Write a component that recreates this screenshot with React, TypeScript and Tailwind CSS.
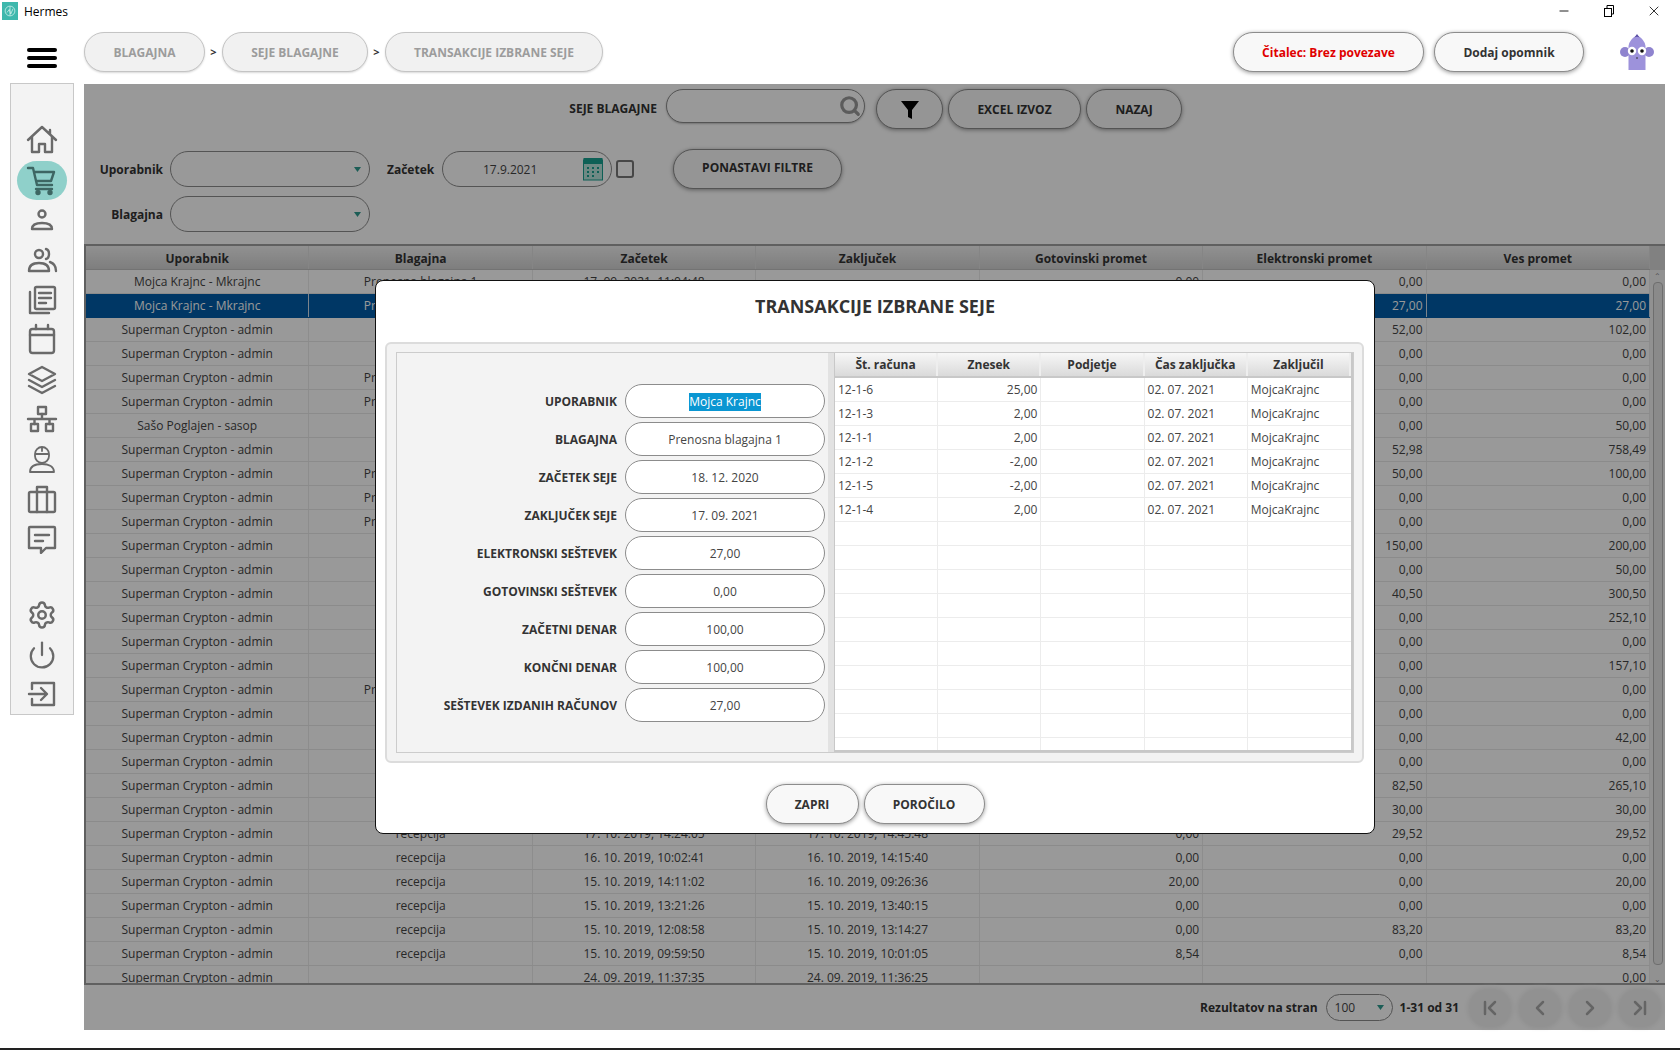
import { ChevronFirst, ChevronLast, ChevronLeft, ChevronRight, Minus, Power, Search, Settings, X } from 'lucide-react'
import type { ReactNode } from 'react'

const U = 'Superman Crypton - admin'
const P = 'Prenosna blagajna 1'
const R = 'recepcija'

// user, blagajna, zacetek, zakljucek, gotovinski, elektronski, ves
const rows: string[][] = [
  ['Mojca Krajnc - Mkrajnc', P, '17. 09. 2021, 11:04:48', '', '0,00', '0,00', '0,00'],
  ['Mojca Krajnc - Mkrajnc', P, '', '', '', '27,00', '27,00'],
  [U, '', '', '', '', '52,00', '102,00'],
  [U, '', '', '', '', '0,00', '0,00'],
  [U, P, '', '', '', '0,00', '0,00'],
  [U, P, '', '', '', '0,00', '0,00'],
  ['Sašo Poglajen - sasop', '', '', '', '', '0,00', '50,00'],
  [U, '', '', '', '', '52,98', '758,49'],
  [U, P, '', '', '', '50,00', '100,00'],
  [U, P, '', '', '', '0,00', '0,00'],
  [U, P, '', '', '', '0,00', '0,00'],
  [U, '', '', '', '', '150,00', '200,00'],
  [U, '', '', '', '', '0,00', '50,00'],
  [U, '', '', '', '', '40,50', '300,50'],
  [U, '', '', '', '', '0,00', '252,10'],
  [U, '', '', '', '', '0,00', '0,00'],
  [U, '', '', '', '', '0,00', '157,10'],
  [U, P, '', '', '', '0,00', '0,00'],
  [U, '', '', '', '', '0,00', '0,00'],
  [U, '', '', '', '', '0,00', '42,00'],
  [U, '', '', '', '', '0,00', '0,00'],
  [U, '', '', '', '', '82,50', '265,10'],
  [U, '', '', '', '', '30,00', '30,00'],
  [U, R, '17. 10. 2019, 14:24:05', '17. 10. 2019, 14:45:48', '0,00', '29,52', '29,52'],
  [U, R, '16. 10. 2019, 10:02:41', '16. 10. 2019, 14:15:40', '0,00', '0,00', '0,00'],
  [U, R, '15. 10. 2019, 14:11:02', '16. 10. 2019, 09:26:36', '20,00', '0,00', '20,00'],
  [U, R, '15. 10. 2019, 13:21:26', '15. 10. 2019, 13:40:15', '0,00', '0,00', '0,00'],
  [U, R, '15. 10. 2019, 12:08:58', '15. 10. 2019, 13:14:27', '0,00', '83,20', '83,20'],
  [U, R, '15. 10. 2019, 09:59:50', '15. 10. 2019, 10:01:05', '8,54', '0,00', '8,54'],
  [U, '', '24. 09. 2019, 11:37:35', '24. 09. 2019, 11:36:25', '', '', '0,00'],
]

const invoices = [
  ['12-1-6', '25,00'],
  ['12-1-3', '2,00'],
  ['12-1-1', '2,00'],
  ['12-1-2', '-2,00'],
  ['12-1-5', '-2,00'],
  ['12-1-4', '2,00'],
]

const fields = [
  ['BLAGAJNA', 'Prenosna blagajna 1'],
  ['ZAČETEK SEJE', '18. 12. 2020'],
  ['ZAKLJUČEK SEJE', '17. 09. 2021'],
  ['ELEKTRONSKI SEŠTEVEK', '27,00'],
  ['GOTOVINSKI SEŠTEVEK', '0,00'],
  ['ZAČETNI DENAR', '100,00'],
  ['KONČNI DENAR', '100,00'],
  ['SEŠTEVEK IZDANIH RAČUNOV', '27,00'],
]

function Ico({ children }: { children: ReactNode }) {
  return (
    <svg viewBox="0 0 32 32" fill="none" stroke="currentColor" strokeWidth="2.4" strokeLinejoin="round" strokeLinecap="round" className="h-8 w-8">
      {children}
    </svg>
  )
}

const navTop: ReactNode[] = [
  <Ico><path d="M2 15 16 2l14 13M24 5v4M6 12v15h7v-8h6v8h7V12" /></Ico>,
  <Ico><path d="M2 3h5l4 17h15M8 7h20l-3 9H10" /><path d="M10 24h16" /><circle cx="12" cy="27.500" r="1.500" fill="currentColor" /><circle cx="24" cy="27.500" r="1.500" fill="currentColor" /></Ico>,
  <Ico><circle cx="16" cy="10" r="3.500" /><path d="M6 25c0-5 4-6 10-6s10 1 10 6z" /></Ico>,
  <Ico><circle cx="13" cy="10" r="4" /><path d="M3 27c0-6 4-8 10-8s10 2 10 8zM20 5c4 1 4 9 0 10M24 18c3 1 6 3 6 9" /></Ico>,
  <Ico><rect x="9" y="3" width="20" height="22" rx="1.500" /><path d="M4 8v21h19M13 9h12M13 14h12M13 19h7" /></Ico>,
  <Ico><rect x="4" y="6" width="24" height="24" rx="2.500" /><path d="M4 12h24M10 2v4M22 2v4" /></Ico>,
  <Ico><path d="m16 4 13 7-13 7-13-7zM3 17l13 7 13-7M3 23l13 7 13-7" /></Ico>,
  <Ico><rect x="12" y="4" width="8" height="7" /><rect x="5" y="21" width="7" height="7" /><rect x="20" y="21" width="7" height="7" /><path d="M16 11v5M2 16h28M8.500 16v5M23.500 16v5" /></Ico>,
  <Ico><path d="M9 12a7 7 0 0 1 14 0zM16 5v4M9 12v2a7 7 0 0 0 14 0v-2" strokeWidth="1.8" /><path d="M4 30c0-6 6-8 12-8s12 2 12 8z" strokeWidth="1.8" /></Ico>,
  <Ico><rect x="3" y="10" width="26" height="20" rx="1.500" /><path d="M11 10V5h10v5M11 10v20M21 10v20" /></Ico>,
  <Ico><path d="M4 5h24a1 1 0 0 1 1 1v20H20l-5 5v-5H3V6a1 1 0 0 1 1-1zM9 13h14M9 19h8" /></Ico>,
]

const Pill = ({ className, children }: { className: string; children: ReactNode }) => (
  <div className={`flex items-center justify-center rounded-[20px] border border-[#8c8c8c] bg-[#f8f8f8] pt-px font-bold shadow-[0_1px_4px_rgba(0,0,0,0.4)] ${className}`}>
    {children}
  </div>
)

const Arrow = () => (
  <svg viewBox="0 0 10 7" className="h-[5px] w-[7px]">
    <path d="M0 0h10L5 7z" fill="#2f9c90" />
  </svg>
)

const Crumb = ({ className, children }: { className: string; children: ReactNode }) => (
  <div className={`flex h-10 items-center justify-center rounded-[20px] border border-[#c4c4c4] bg-[#f1f1f1] pt-px font-bold text-[#9c9c9c] shadow-[0_1px_2px_rgba(0,0,0,0.15)] ${className}`}>
    {children}
  </div>
)

const PageBtn = ({ children }: { children: ReactNode }) => (
  <div className="flex h-[38px] w-[42px] items-center justify-center rounded-full bg-[#f2f2f2] shadow-[0_0_4px_2px_#f2f2f2]">{children}</div>
)

export default function App() {
  return (
    <div className="flex h-[1050px] w-[1680px] flex-col overflow-hidden bg-white font-['Open_Sans',sans-serif] text-[12px] text-[#444]">
      {/* title bar */}
      <div className="flex h-[22px] items-center text-[12px] text-black">
        <div className="ml-[2px] flex h-[18px] w-4 items-center justify-center bg-[#3fb8ad]">
          <svg viewBox="0 0 16 16" className="h-3 w-3" fill="none" stroke="#d5f1ee" strokeWidth="1">
            <circle cx="8" cy="8" r="6.500" />
            <path d="M8 2v12M4 10l3-4 2 6 3-7" />
          </svg>
        </div>
        <span className="ml-[6px] pt-px">Hermes</span>
        <div className="ml-auto flex items-center text-black">
          <Minus className="mr-[32px] h-[14px] w-[14px]" strokeWidth={1.500} />
          <svg viewBox="0 0 12 12" className="mr-[31px] h-3 w-3" fill="none" stroke="currentColor">
            <rect x="1.500" y="3.500" width="7" height="8" />
            <path d="M4 3V.5h6.500V9H8.500" />
          </svg>
          <X className="mr-[18px] h-[16px] w-[16px]" strokeWidth={1.200} />
        </div>
      </div>

      {/* header */}
      <div className="flex h-[62px] items-start pt-[10px]">
        <div className="ml-[27px] mt-[16px] flex h-[20px] w-[30px] flex-col justify-between">
          <div className="h-1 rounded-sm bg-black" />
          <div className="h-1 rounded-sm bg-black" />
          <div className="h-1 rounded-sm bg-black" />
        </div>
        <Crumb className="ml-[27px] w-[121px]">BLAGAJNA</Crumb>
        <span className="flex h-10 w-[17px] items-center justify-center text-[11px] font-bold text-[#333]">&gt;</span>
        <Crumb className="w-[146px]">SEJE BLAGAJNE</Crumb>
        <span className="flex h-10 w-[17px] items-center justify-center text-[11px] font-bold text-[#333]">&gt;</span>
        <Crumb className="w-[218px]">TRANSAKCIJE IZBRANE SEJE</Crumb>
        <Pill className="ml-auto h-10 w-[191px] text-[#e00000]">Čitalec: Brez povezave</Pill>
        <Pill className="ml-[10px] h-10 w-[150px] text-[#333]">Dodaj opomnik</Pill>
        <svg viewBox="0 0 34 40" className="ml-[36px] mr-[26px] h-[40px] w-[34px]">
          <circle cx="5" cy="20" r="5" fill="#8f84cf" />
          <circle cx="29" cy="20" r="5" fill="#8f84cf" />
          <path d="M8.500 38V14Q9 8 17 3Q25 8 25.500 14V38Z" fill="#9d92db" />
          <path d="M14.500 5.500 17 2l2.500 3.500Q17 4 14.500 5.500z" fill="#5a4fa3" />
          <circle cx="12" cy="19" r="4.200" fill="#fff" />
          <circle cx="22" cy="19" r="4.200" fill="#fff" />
          <circle cx="12" cy="19" r="1.800" fill="#111" />
          <circle cx="22" cy="19" r="1.800" fill="#111" />
          <path d="M17 25v2" stroke="#333" strokeWidth="1" />
        </svg>
      </div>

      <div className="flex flex-1">
        {/* sidebar */}
        <div className="ml-[10px] mt-[-1px] flex h-[632px] w-16 flex-col items-center border border-[#c8c8c8] bg-[#f3f3f3] pt-[37px] text-[#6a6a6a]">
          {navTop.map((icon, i) =>
            i === 1 ? (
              <div key={i} className="relative flex h-10 w-full items-center justify-center">
                <div className="flex h-[39px] w-[50px] items-center justify-center rounded-[20px] bg-[#8fd0ca] text-[#3d6663]">{icon}</div>
              </div>
            ) : (
              <div key={i} className="flex h-10 w-full items-center justify-center">
                {icon}
              </div>
            ),
          )}
          <div className="h-[38px]" />
          <div className="flex h-10 w-full items-center justify-center">
            <Settings className="h-[30px] w-[30px]" strokeWidth={2} />
          </div>
          <div className="flex h-10 w-full items-center justify-center">
            <Power className="h-[30px] w-[30px]" strokeWidth={1.800} />
          </div>
          <div className="flex h-10 w-full items-center justify-center">
            <Ico><path d="M6 11V5h22v22H6v-6M3 16h17M15 10l6 6-6 6" /></Ico>
          </div>
        </div>

        {/* content */}
        <div className="relative ml-[10px] h-[946px] w-[1581px]">
          <div className="flex h-[65px] items-start pl-[486px] pt-[5px]">
            <span className="mr-[9px] flex h-[40px] w-[87px] items-center justify-end whitespace-nowrap font-bold text-[#333]">SEJE BLAGAJNE</span>
            <div className="flex h-[34px] w-[199px] items-center justify-end rounded-[17px] border border-[#8c8c8c] bg-white pr-[3px] shadow-[0_1px_2px_rgba(0,0,0,0.25)]">
              <Search className="h-[22px] w-[22px] text-[#999999]" strokeWidth={3.500} />
            </div>
            <Pill className="ml-[11px] h-10 w-[67px]">
              <svg viewBox="0 0 20 20" className="h-5 w-5">
                <path d="M1 1h18l-7 9v9l-4-2v-7z" fill="#000" />
              </svg>
            </Pill>
            <Pill className="ml-[5px] h-10 w-[133px] text-[#333]">EXCEL IZVOZ</Pill>
            <Pill className="ml-[5px] h-10 w-[96px] text-[#333]">NAZAJ</Pill>
          </div>

          <div className="flex h-[95px]">
            <div className="flex flex-col gap-[9px] pt-[2px]">
              <div className="flex items-center">
                <span className="w-[79px] pt-px text-right font-bold text-[#333]">Uporabnik</span>
                <div className="ml-[7px] flex h-9 w-[200px] items-center justify-end rounded-[18px] border border-[#8c8c8c] pr-[8px]">
                  <Arrow />
                </div>
              </div>
              <div className="flex items-center">
                <span className="w-[79px] pt-px text-right font-bold text-[#333]">Blagajna</span>
                <div className="ml-[7px] flex h-9 w-[200px] items-center justify-end rounded-[18px] border border-[#8c8c8c] pr-[8px]">
                  <Arrow />
                </div>
              </div>
            </div>
            <div className="ml-[17px] mt-[2px] flex h-9 items-center">
              <span className="w-[48px] pt-px font-bold text-[#333]">Začetek</span>
              <div className="ml-[7px] flex h-9 w-[170px] items-center rounded-[18px] border border-[#8c8c8c] pl-[40px] pr-[8px]">
                <span className="pt-px">17.9.2021</span>
                <svg viewBox="0 0 20 24" className="ml-auto h-[24px] w-[20px]">
                  <rect x="0.500" y="3" width="19" height="20" fill="#b9e4dd" stroke="#18a08f" />
                  <rect x="0.500" y="1" width="19" height="6" fill="#18a08f" />
                  <path d="M4 11h2M9 11h2M14 11h2M4 15h2M9 15h2M14 15h2M4 19h2M9 19h2" stroke="#18a08f" strokeWidth="2" />
                </svg>
              </div>
              <div className="ml-1 h-[18px] w-[18px] rounded-[3px] border-2 border-[#777]" />
            </div>
            <Pill className="ml-[39px] h-10 w-[169px] pb-[3px] text-[#333]">PONASTAVI FILTRE</Pill>
          </div>

          {/* sessions table */}
          <div className="h-[741px] overflow-hidden border-y-2 border-l-2 border-[#a0a0a0]">
            <div className="flex h-[24px] w-full">
              <div className="grid flex-1 grid-cols-[repeat(7,1fr)] border-b border-[#c0c0c0] bg-gradient-to-b from-[#f2f2f2] to-[#d2d2d2] font-bold text-[#333]">
                {['Uporabnik', 'Blagajna', 'Začetek', 'Zaključek', 'Gotovinski promet', 'Elektronski promet', 'Ves promet'].map((h) => (
                  <div key={h} className="flex items-center justify-center border-r border-[#dedede] pt-[2px]">
                    {h}
                  </div>
                ))}
              </div>
              <div className="w-[15px] bg-[#d8d8d8]" />
            </div>
            <div className="flex h-[715px]">
              <div className="flex-1 overflow-hidden">
                {rows.map((r, i) => (
                  <div key={i} className={`grid h-6 grid-cols-[repeat(7,1fr)] border-b ${i === 1 ? 'border-[#005ca8] bg-[#005ca8] text-white' : 'border-[#e8e8e8] bg-white'}`}>
                    {r.map((c, j) => (
                      <div key={j} className={`flex items-center overflow-hidden whitespace-nowrap border-r px-[3px] pt-px ${j > 3 ? 'justify-end' : 'justify-center'} ${i === 1 ? 'border-[#cfdcea]' : 'border-[#ececec]'}`}>
                        {c}
                      </div>
                    ))}
                  </div>
                ))}
              </div>
              <div className="flex w-[15px] flex-col items-center bg-[#f2f2f2]">
                <span className="h-3 text-[8px] leading-3 text-[#888]">⌃</span>
                <div className="h-[683px] w-[10px] rounded-sm border border-[#b8b8b8] bg-[#e6e6e6]" />
                <span className="mt-auto h-3 text-[8px] leading-3 text-[#888]">⌄</span>
              </div>
            </div>
          </div>

          {/* pager */}
          <div className="flex h-[45px] items-center justify-end pr-1">
            <span className="pt-px font-bold text-[#333]">Rezultatov na stran</span>
            <div className="ml-2 flex h-[27px] w-[67px] items-center rounded-[14px] border border-[#8c8c8c] pl-[8px] pr-[8px]">
              100
              <span className="ml-auto flex"><Arrow /></span>
            </div>
            <span className="ml-[7px] pt-px font-bold text-[#333]">1-31 od 31</span>
            <div className="ml-[10px] flex gap-2 text-[#a8a8a8]">
              <PageBtn><ChevronFirst className="h-6 w-6" strokeWidth={2.500} /></PageBtn>
              <PageBtn><ChevronLeft className="h-6 w-6" strokeWidth={2.500} /></PageBtn>
              <PageBtn><ChevronRight className="h-6 w-6" strokeWidth={2.500} /></PageBtn>
              <PageBtn><ChevronLast className="h-6 w-6" strokeWidth={2.500} /></PageBtn>
            </div>
          </div>

          {/* dim layer */}
          <div className="absolute inset-0 bg-black/40" />

          {/* modal */}
          <div className="absolute left-[291px] top-[196px] flex h-[554px] w-[1000px] flex-col rounded-lg border border-[#111] bg-white">
            <div className="flex h-[61px] items-center justify-center pb-[10px] text-[18px] font-bold text-[#333]">TRANSAKCIJE IZBRANE SEJE</div>
            <div className="ml-[9px] mr-[10px] h-[421px] rounded-md border-2 border-[#dcdcdc] bg-[#f3f3f3] pb-[8px] pl-[9px] pr-[8px] pt-[8px]">
              <div className="flex h-[401px] border border-[#cccccc]">
                <div className="w-[431px] pt-[31px]">
                  <div className="flex h-[34px] items-center">
                    <span className="w-[220px] pt-px text-right font-bold text-[#333]">UPORABNIK</span>
                    <div className="ml-[8px] flex h-[34px] w-[200px] items-center justify-center rounded-[17px] border border-[#8c8c8c] bg-white pt-px">
                      <span className="bg-[#0a96d2] text-white">Mojca Krajnc</span>
                    </div>
                  </div>
                  {fields.map(([l, v]) => (
                    <div key={l} className="mt-1 flex h-[34px] items-center">
                      <span className="w-[220px] pt-px text-right font-bold text-[#333]">{l}</span>
                      <div className="ml-[8px] flex h-[34px] w-[200px] items-center justify-center rounded-[17px] border border-[#8c8c8c] bg-white pt-px">{v}</div>
                    </div>
                  ))}
                </div>
                <div className="w-[6px] bg-[#e2e2e2]" />
                <div className="h-[399px] w-[519px] overflow-hidden border-b-2 border-l border-r-2 border-[#c8c8c8] bg-white">
                  <div className="grid h-[25px] grid-cols-[repeat(5,1fr)] border-b-2 border-[#c8c8c8] bg-gradient-to-b from-[#f7f7f7] to-[#dadada] font-bold text-[#333]">
                    {['Št. računa', 'Znesek', 'Podjetje', 'Čas zaključka', 'Zaključil'].map((h) => (
                      <div key={h} className="flex items-center justify-center border-r-2 border-[#eeeeee] pt-px">{h}</div>
                    ))}
                  </div>
                  {Array.from({ length: 16 }).map((_, i) => {
                    const inv = invoices[i]
                    return (
                      <div key={i} className="grid h-6 grid-cols-[repeat(5,1fr)] border-b border-[#ececec]">
                        <div className="flex items-center border-r border-[#ececec] px-[3px]">{inv?.[0]}</div>
                        <div className="flex items-center justify-end border-r border-[#ececec] px-[3px]">{inv?.[1]}</div>
                        <div className="border-r border-[#ececec]" />
                        <div className="flex items-center border-r border-[#ececec] px-[3px]">{inv && '02. 07. 2021'}</div>
                        <div className="flex items-center px-[3px]">{inv && 'MojcaKrajnc'}</div>
                      </div>
                    )
                  })}
                </div>
              </div>
            </div>
            <div className="mt-[21px] flex justify-center gap-[5px]">
              <Pill className="h-10 w-[93px] text-[#333]">ZAPRI</Pill>
              <Pill className="h-10 w-[121px] text-[#333]">POROČILO</Pill>
            </div>
          </div>
        </div>
      </div>

      <div className="h-[2px] bg-[#222]" />
    </div>
  )
}
